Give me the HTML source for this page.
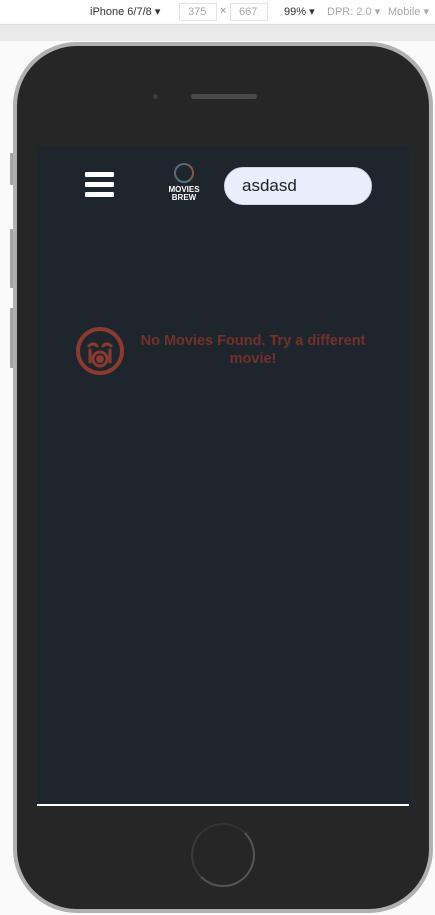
<!DOCTYPE html>
<html><head><meta charset="utf-8"><style>
*{margin:0;padding:0;box-sizing:border-box}
body{width:435px;height:915px;background:#fafafa;position:relative;overflow:hidden;font-family:"Liberation Sans",sans-serif}
.tb{position:absolute;top:0;left:0;width:435px;height:23px;background:#fff;font-size:11px;color:#333}
.tb span{position:absolute;top:5px}
.box{position:absolute;top:3px;height:18px;border:1px solid #e4e4e4;color:#aaa;padding:2px 0 0 8px}
.strip{position:absolute;top:24px;left:0;width:435px;height:17px;background:#eaeaea;border-top:1px solid #ddd}
.phone{position:absolute;left:13px;top:42px;width:420px;height:871px;border-radius:64px;background:#b0b0b0}
.inner{position:absolute;left:4px;top:4px;right:4px;bottom:4px;border-radius:60px;background:#262626}
.btn{position:absolute;left:10px;width:4px;background:#a5a5a5;border-radius:1px}
.screen{position:absolute;left:37px;top:146px;width:372px;height:660px;background:#1f252c;border-bottom:2px solid #fff}
</style></head><body>
<div class="tb">
<span style="left:90px">iPhone 6/7/8 ▾</span>
<div class="box" style="left:179px;width:38px">375</div>
<span style="left:220px;color:#888">×</span>
<div class="box" style="left:230px;width:38px">667</div>
<span style="left:284px">99% ▾</span>
<span style="left:327px;color:#aaa">DPR: 2.0 ▾</span>
<span style="left:388px;color:#aaa">Mobile ▾</span>
</div>
<div class="strip"></div>
<div class="btn" style="top:153px;height:32px"></div>
<div class="btn" style="top:229px;height:59px"></div>
<div class="btn" style="top:308px;height:60px"></div>
<div class="phone"><div class="inner"></div></div>
<div style="position:absolute;left:153px;top:94px;width:5px;height:5px;border-radius:50%;background:#3a3a44"></div>
<div style="position:absolute;left:191px;top:94px;width:66px;height:5px;border-radius:3px;background:#4a4a4a"></div>
<div style="position:absolute;left:191px;top:823px;width:64px;height:64px;border-radius:50%;border:2px solid #555;border-top-color:#333;border-left-color:#3a3a3a"></div>
<div class="screen">
<div style="position:absolute;left:48px;top:26px;width:29px;height:5px;background:#fff;border-radius:1px"></div>
<div style="position:absolute;left:48px;top:36px;width:29px;height:5px;background:#fff;border-radius:1px"></div>
<div style="position:absolute;left:48px;top:46px;width:29px;height:5px;background:#fff;border-radius:1px"></div>
<div style="position:absolute;left:137px;top:17px;width:20px;height:20px;border-radius:50%;border:2px solid #5a6a70;border-right-color:#8a5a3a;border-bottom-color:#4a7a7a"></div>
<div style="position:absolute;left:126px;top:40px;width:42px;text-align:center;color:#fff;font-size:8px;font-weight:bold;line-height:8px">MOVIES<br>BREW</div>
<div style="position:absolute;left:187px;top:21px;width:148px;height:38px;border-radius:19px;background:#e8eefb;border:1px solid #cfd6e4;font-size:17px;color:#222;padding:8px 0 0 17px">asdasd</div>
<svg style="position:absolute;left:38px;top:180px" width="50" height="50" viewBox="0 0 50 50">
<g fill="none" stroke="#8a3a31" stroke-width="4" stroke-linecap="round">
<circle cx="25" cy="25" r="22"/>
<path d="M14 20 q4 -4 8 0 M28 20 q4 -4 8 0" stroke-width="3"/>
<path d="M15 24 v12 M35 24 v12" stroke-width="3"/>
</g>
<circle cx="25" cy="33" r="7" fill="none" stroke="#8a3a31" stroke-width="3"/>
<circle cx="25" cy="33" r="4" fill="#8a3a31"/>
</svg>
<div style="position:absolute;left:96px;top:186px;width:240px;text-align:center;color:#74302b;font-size:14.5px;font-weight:bold;line-height:18px">No Movies Found. Try a different movie!</div>
</div>
</body></html>
